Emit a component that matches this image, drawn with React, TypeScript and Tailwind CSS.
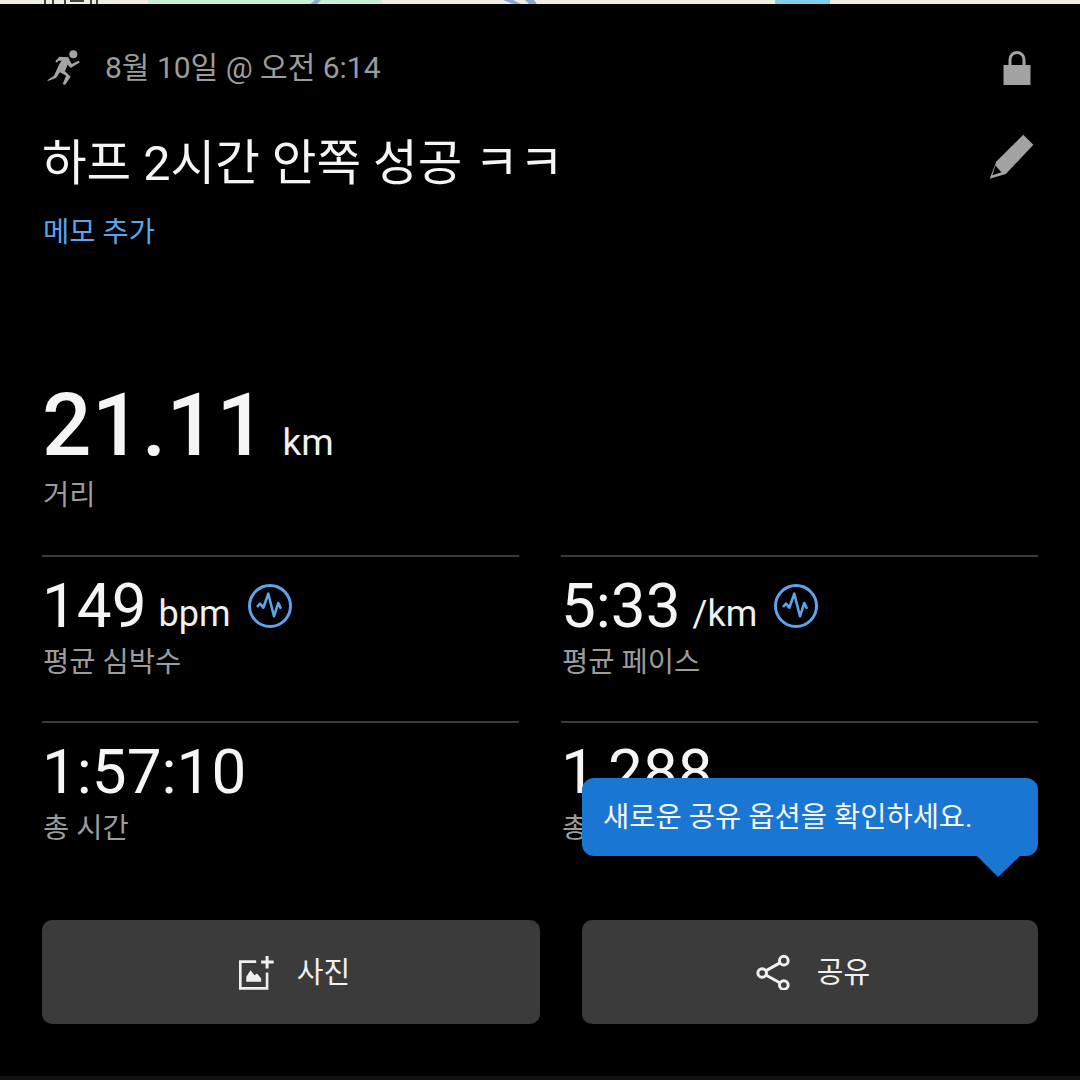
const KR = "font-['Roboto','Noto_Sans_CJK_KR',sans-serif]";

function MapStrip() {
  return (
    <svg width="1080" height="4" viewBox="0 0 1080 4" className="block">
      <rect width="1080" height="4" fill="#f1ede2" />
      <rect x="148" width="234" height="4" fill="#c9f0d5" />
      <rect x="775" width="55" height="4" fill="#7fd0ea" />
      <path d="M310 4l5-4h6l-4 4z" fill="#8fa8d0" />
      <path d="M503 0h10l8 4h-8zM525 0h9l3 4h-8z" fill="#8fa8d0" />
      <path d="M44 0h2v4h-2zM52 0h2v4h-2zM64 0h2v4h-2zM70 0h14v2H70zM90 0h2v4h-2zM96 0h2v4h-2z" fill="#444" />
    </svg>
  );
}

function RunIcon() {
  return (
    <svg width="37" height="38" viewBox="45 25 111 114" fill="#a3a3a3" className="block">
      <circle cx="130" cy="41" r="12" />
      <path d="M76 62L88 48L115 50L125 70L145 60L150 65L122 82L113 72L105 92L122 108L105 133L98 130L108 105L90 95L78 112L52 122L54 117L72 105L88 70L95 60L86 60L80 66z" />
    </svg>
  );
}

function LockIcon() {
  return (
    <svg width="28" height="36" viewBox="0 0 28 36" fill="none" className="block">
      <path d="M7 16V9.500a7 7 0 0 1 14 0V16" stroke="#a3a3a3" strokeWidth="3" />
      <rect x="0.500" y="15" width="27" height="20" fill="#a3a3a3" />
    </svg>
  );
}

function PencilIcon() {
  return (
    <svg width="45" height="45" viewBox="268 313 134 134" className="block">
      <path d="M370 315L400 345L318 432L270 446L290 395z" fill="#a3a3a3" />
      <path d="M287 407L305 427L278 436z" fill="#000" />
    </svg>
  );
}

function PulseIcon() {
  return (
    <svg width="46" height="46" viewBox="0 0 46 46" fill="none" className="block shrink-0">
      <circle cx="23" cy="23" r="20.500" stroke="#5aa5ec" strokeWidth="3" />
      <path d="M10 24L13 20.700L16.300 24.700L21.300 10.700L27 33.300L31.300 20L34 25.700" stroke="#5aa5ec" strokeWidth="2.600" strokeLinejoin="round" />
    </svg>
  );
}

function PhotoIcon() {
  return (
    <svg width="37" height="37" viewBox="55 66 112 112" fill="none" className="block">
      <path d="M110 89H62V170H143V122" stroke="#f0f0f0" strokeWidth="8" />
      <path d="M143 72V110M125 90H163" stroke="#f0f0f0" strokeWidth="9" />
      <path d="M80 150V135L93 115L105 130L113 125L125 140V150z" fill="#f0f0f0" />
    </svg>
  );
}

function ShareIcon() {
  return (
    <svg width="35" height="36" viewBox="50 70 104 108" fill="none" stroke="#f0f0f0" strokeWidth="9" className="block">
      <path d="M133 90L68 127L133 163" />
      <circle cx="133" cy="90" r="13" fill="#3b3b3b" />
      <circle cx="68" cy="127" r="13" fill="#3b3b3b" />
      <circle cx="133" cy="163" r="13" fill="#3b3b3b" />
    </svg>
  );
}

function Stat({ value, unit, label, pulse }: { value: string; unit?: string; label: string; pulse?: boolean }) {
  return (
    <div className="h-[166px] border-t-2 border-[#3a3a3a]">
      <div className="flex items-center h-[72px] mt-[13px]">
        <span className="text-[62px] leading-none text-[#f5f5f5]">{value}</span>
        {unit ? <span className="ml-[12px] mt-[16px] text-[36px] leading-none text-[#f0f0f0]">{unit}</span> : null}
        {pulse ? <div className="ml-[16px]"><PulseIcon /></div> : null}
      </div>
      <div className="ml-px -mt-[1px] text-[28.5px] leading-[44px] text-[#9c9c9c]">{label}</div>
    </div>
  );
}

export default function App() {
  return (
    <div className={`relative w-[1080px] h-[1080px] overflow-hidden bg-black ${KR}`}>
      <MapStrip />
      <div className="px-[42px]">
        <div className="flex items-center justify-between h-[36px] mt-[46px]">
          <div className="flex items-center">
            <div className="ml-[3px]"><RunIcon /></div>
            <span className="ml-[23px] text-[30px] leading-none text-[#9c9c9c]">8월 10일 @ 오전 6:14</span>
          </div>
          <div className="mr-[7px]"><LockIcon /></div>
        </div>
        <div className="flex items-center justify-between mt-[38px] h-[72px]">
          <h1 className="text-[48.5px] font-normal leading-none text-[#f5f5f5] mt-[8px]">하프 2시간 안쪽 성공 ㅋㅋ</h1>
          <div className="mr-[4px] -mt-[8px]"><PencilIcon /></div>
        </div>
        <div className="ml-px mt-[15px] text-[28.5px] leading-[44px] text-[#5aa5ec]">메모 추가</div>
        <div className="flex items-baseline mt-[122px] h-[96px]">
          <span className="text-[87px] font-medium leading-[96px] text-[#f5f5f5] tracking-[0.5px]">21.11</span>
          <span className="ml-[16px] text-[37px] leading-none text-[#f0f0f0]">km</span>
        </div>
        <div className="ml-px text-[28.5px] leading-[44px] text-[#9c9c9c] mt-[1px]">거리</div>
        <div className="grid grid-cols-[477px_477px] gap-x-[42px] mt-[37px]">
          <Stat value="149" unit="bpm" label="평균 심박수" pulse />
          <Stat value="5:33" unit="/km" label="평균 페이스" pulse />
          <Stat value="1:57:10" label="총 시간" />
          <Stat value="1,288" label="총 칼로리" />
        </div>
        <div className="grid grid-cols-[498px_456px] gap-x-[42px] mt-[33px]">
          <button type="button" className="flex items-center justify-center pl-[6px] h-[104px] rounded-[10px] bg-[#3b3b3b]">
            <PhotoIcon />
            <span className="ml-[22px] mt-[4px] text-[29px] text-[#f0f0f0]">사진</span>
          </button>
          <button type="button" className="flex items-center justify-center pl-[6px] h-[104px] rounded-[10px] bg-[#3b3b3b]">
            <ShareIcon />
            <span className="ml-[26px] mt-[4px] text-[29px] text-[#f0f0f0]">공유</span>
          </button>
        </div>
      </div>
      <div className="absolute left-0 bottom-0 w-full h-[4px] bg-[#121212]" />
      <div className="absolute left-[582px] top-[778px] w-[456px] h-[78px] rounded-[12px] bg-[#1976d2] pl-[21px] flex items-center">
        <span className="text-[28.5px] text-[#f5f5f5] mt-[2px]">새로운 공유 옵션을 확인하세요.</span>
        <div className="absolute left-[395px] top-[78px] w-0 h-0 border-l-[21px] border-r-[22px] border-t-[21px] border-l-transparent border-r-transparent border-t-[#1976d2]" />
      </div>
    </div>
  );
}
